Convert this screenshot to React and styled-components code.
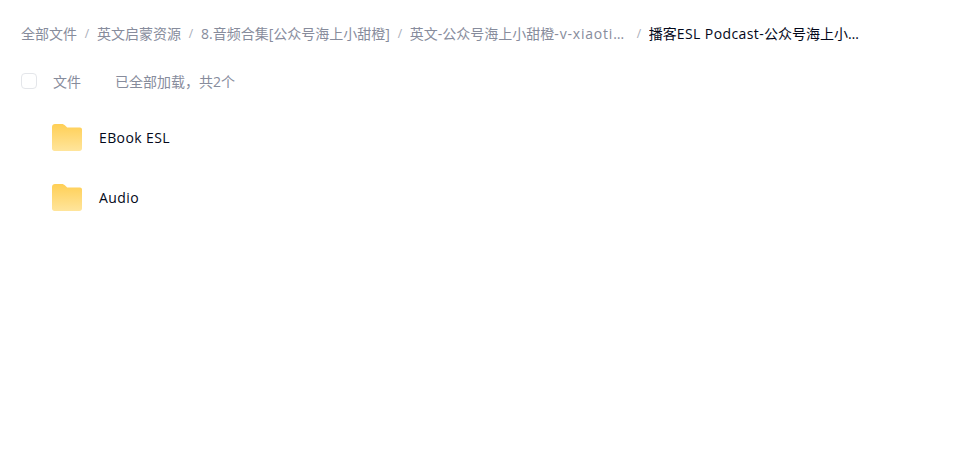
import React from 'react';
import styled, { createGlobalStyle } from 'styled-components';

const GlobalStyle = createGlobalStyle`
  html, body {
    margin: 0;
    background: #fff;
  }
  body {
    font-family: "Open Sans", "Noto Sans CJK SC", sans-serif;
  }
`;

const Page = styled.div`
  width: 971px;
  height: 450px;
  padding: 24px 0 0 21px;
  box-sizing: border-box;
  overflow: hidden;
`;

const Crumbs = styled.nav`
  display: flex;
  align-items: center;
  height: 20px;
  font-size: 14px;
  line-height: 20px;
  white-space: nowrap;
`;

const Crumb = styled.span`
  display: block;
  color: ${props => (props.$current ? '#03081a' : '#878c9c')};
  max-width: ${props => props.$max || 'none'};
  overflow: hidden;
  text-overflow: ellipsis;
`;

const Latin = styled.span`
  letter-spacing: ${props => props.$spacing || '0.4px'};
`;

const Slash = styled.span`
  color: #a8adb8;
  width: 20px;
  text-align: center;
  font-size: 12px;
  flex: none;
`;

const ListHead = styled.div`
  display: flex;
  align-items: center;
  height: 20px;
  margin-top: 27px;
  font-size: 14px;
  color: #878c9c;
`;

const Check = styled.span`
  width: 14px;
  height: 14px;
  border: 1px solid #e4e6ea;
  border-radius: 4px;
  flex: none;
  margin-right: 16px;
`;

const Count = styled.span`
  margin-left: 34px;
`;

const Rows = styled.div`
  margin-top: 16px;
  padding-left: 31px;
`;

const Row = styled.div`
  display: flex;
  align-items: center;
  height: 60px;
  gap: 17px;
  font-size: 14px;
  letter-spacing: 0.4px;
  color: #03081a;
`;

const FolderIcon = ({ id }) => (
  <svg width="30" height="27" viewBox="0 0 30 27" style={{ flex: 'none' }}>
    <defs>
      <linearGradient id={id} x1="0" y1="0" x2="0" y2="1">
        <stop offset="0" stopColor="#ffcf55" />
        <stop offset="1" stopColor="#ffe59c" />
      </linearGradient>
    </defs>
    <path d="M3 0h6.5c1.6 0 2.8.6 3.9 1.7L15.2 3.5H28c1.1 0 2 .9 2 2V24.5c0 1.4-1.1 2.5-2.5 2.5H2.5C1.1 27 0 25.9 0 24.5V3C0 1.3 1.3 0 3 0z" fill={`url(#${id})`} />
  </svg>
);

export default function App() {
  return (
    <Page>
      <GlobalStyle />
      <Crumbs>
        <Crumb>全部文件</Crumb>
        <Slash>/</Slash>
        <Crumb>英文启蒙资源</Crumb>
        <Slash>/</Slash>
        <Crumb>8.音频合集[公众号海上小甜橙]</Crumb>
        <Slash>/</Slash>
        <Crumb $max="219px">英文-公众号海上小甜橙<Latin $spacing="0.8px">-v-xiaotian-</Latin>资源合集</Crumb>
        <Slash>/</Slash>
        <Crumb $current $max="212px">播客<Latin>ESL Podcast-</Latin>公众号海上小甜橙资源</Crumb>
      </Crumbs>
      <ListHead>
        <Check />
        <span>文件</span>
        <Count>已全部加载，共2个</Count>
      </ListHead>
      <Rows>
        <Row><FolderIcon id="folderA" />EBook ESL</Row>
        <Row><FolderIcon id="folderB" />Audio</Row>
      </Rows>
    </Page>
  );
}
